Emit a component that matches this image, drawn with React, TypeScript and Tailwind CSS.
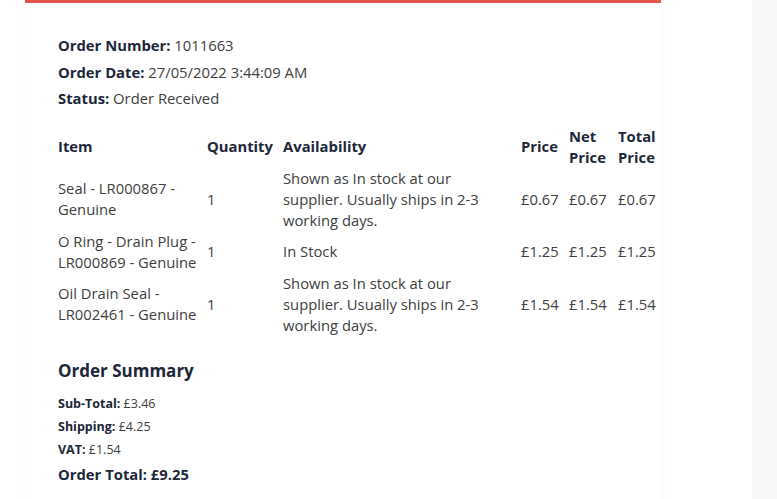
const items = [
  {
    name: 'Seal - LR000867 - Genuine',
    qty: 1,
    availability: 'Shown as In stock at our supplier. Usually ships in 2-3 working days.',
    price: '£0.67',
  },
  {
    name: 'O Ring - Drain Plug - LR000869 - Genuine',
    qty: 1,
    availability: 'In Stock',
    price: '£1.25',
  },
  {
    name: 'Oil Drain Seal - LR002461 - Genuine',
    qty: 1,
    availability: 'Shown as In stock at our supplier. Usually ships in 2-3 working days.',
    price: '£1.54',
  },
];

export default function App() {
  return (
    <div className="w-[777px] h-[499px] overflow-hidden bg-white flex font-['Open_Sans',sans-serif] text-[#404040]">
      <div className="w-[752px] shrink-0 pl-[25px] pr-[91px]">
        {/* Card */}
        <div className="border-t-[3px] border-[#e5534b] bg-white shadow-[0_0_6px_rgba(0,0,0,0.03)] pl-[33px] pt-[32px] pb-[60px]">
          <div className="flex flex-col gap-[5px] text-[14.8px] leading-[21.5px]">
            <p>
              <span className="font-bold text-[#1d2739]">Order Number:</span> 1011663
            </p>
            <p>
              <span className="font-bold text-[#1d2739]">Order Date:</span> 27/05/2022 3:44:09 AM
            </p>
            <p>
              <span className="font-bold text-[#1d2739]">Status:</span> Order Received
            </p>
          </div>

          <table className="mt-[16px] w-[603px] table-fixed border-collapse text-[14.8px] leading-[21px]">
            <colgroup>
              <col className="w-[149px]" />
              <col className="w-[76px]" />
              <col className="w-[238px]" />
              <col className="w-[48px]" />
              <col className="w-[49px]" />
              <col className="w-[43px]" />
            </colgroup>
            <thead>
              <tr className="text-left align-middle text-[#1d2739]">
                <th className="pr-[5px] font-bold">Item</th>
                <th className="pr-[5px] font-bold">Quantity</th>
                <th className="pr-[12px] font-bold">Availability</th>
                <th className="pr-[5px] font-bold">Price</th>
                <th className="pr-[5px] font-bold">Net Price</th>
                <th className="font-bold">Total Price</th>
              </tr>
            </thead>
            <tbody>
              {items.map((item, i) => (
                <tr key={i} className="align-middle">
                  <td className="pr-[5px]">{item.name}</td>
                  <td className="pr-[5px]">{item.qty}</td>
                  <td className="pr-[12px]">{item.availability}</td>
                  <td className="pr-[5px]">{item.price}</td>
                  <td className="pr-[5px]">{item.price}</td>
                  <td>{item.price}</td>
                </tr>
              ))}
            </tbody>
          </table>

          <h3 className="mt-[23px] text-[17px] leading-[24px] font-bold text-[#1d2739]">Order Summary</h3>
          <div className="mt-[9px] flex flex-col text-[12.5px] leading-[23px]">
            <p>
              <span className="font-bold text-[#1d2739]">Sub-Total:</span> £3.46
            </p>
            <p>
              <span className="font-bold text-[#1d2739]">Shipping:</span> £4.25
            </p>
            <p>
              <span className="font-bold text-[#1d2739]">VAT:</span> £1.54
            </p>
          </div>
          <p className="mt-[1px] text-[14.8px] leading-[24px] font-bold text-[#1d2739]">Order Total: £9.25</p>
        </div>
      </div>
      <div className="flex-1 bg-[#f7f7f7]" />
    </div>
  );
}
